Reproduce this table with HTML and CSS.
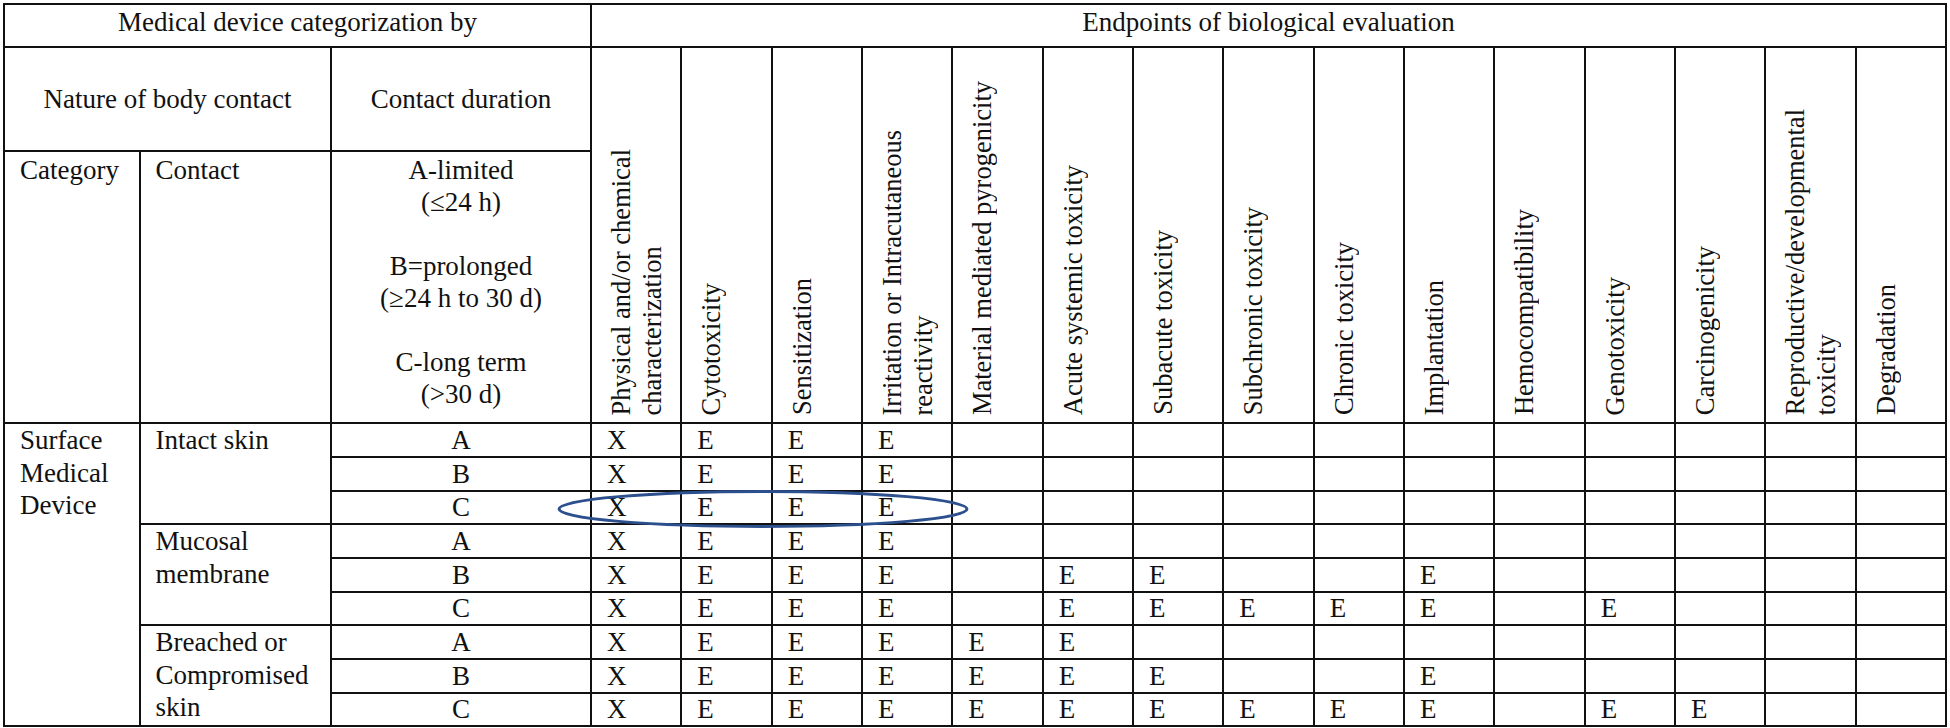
FILE: index.html
```html
<!DOCTYPE html>
<html lang="en">
<head>
<meta charset="utf-8">
<title>Biological evaluation endpoints</title>
<link rel="stylesheet" href="styles.css">
</head>
<body>
<div class="page">
  <table class="grid">
    <colgroup>
      <col class="c-cat"><col class="c-con"><col class="c-dur">
      <col><col><col><col><col><col><col><col><col><col><col><col><col><col><col>
    </colgroup>
    <thead>
      <tr class="r1">
        <th colspan="3" class="top">Medical device categorization by</th>
        <th colspan="15" class="top">Endpoints of biological evaluation</th>
      </tr>
      <tr class="r2">
        <th colspan="2" class="mid">Nature of body contact</th>
        <th class="mid">Contact duration</th>
        <th rowspan="2" class="vh"><div class="vt">Physical and/or chemical<br>characterization</div></th>
        <th rowspan="2" class="vh"><div class="vt">Cytotoxicity</div></th>
        <th rowspan="2" class="vh"><div class="vt">Sensitization</div></th>
        <th rowspan="2" class="vh"><div class="vt">Irritation or Intracutaneous<br>reactivity</div></th>
        <th rowspan="2" class="vh"><div class="vt">Material mediated pyrogenicity</div></th>
        <th rowspan="2" class="vh"><div class="vt">Acute systemic toxicity</div></th>
        <th rowspan="2" class="vh"><div class="vt">Subacute toxicity</div></th>
        <th rowspan="2" class="vh"><div class="vt">Subchronic toxicity</div></th>
        <th rowspan="2" class="vh"><div class="vt">Chronic toxicity</div></th>
        <th rowspan="2" class="vh"><div class="vt">Implantation</div></th>
        <th rowspan="2" class="vh"><div class="vt">Hemocompatibility</div></th>
        <th rowspan="2" class="vh"><div class="vt">Genotoxicity</div></th>
        <th rowspan="2" class="vh"><div class="vt">Carcinogenicity</div></th>
        <th rowspan="2" class="vh"><div class="vt">Reproductive/developmental<br>toxicity</div></th>
        <th rowspan="2" class="vh"><div class="vt">Degradation</div></th>
      </tr>
      <tr class="r3">
        <th class="sub">Category</th>
        <th class="sub">Contact</th>
        <th class="sub dur">A-limited<br>(≤24 h)<br><br>B=prolonged<br>(≥24 h to 30 d)<br><br>C-long term<br>(&gt;30 d)</th>
      </tr>
    </thead>
    <tbody>
      <tr class="dr t">
        <td rowspan="9" class="lab">Surface Medical Device</td>
        <td rowspan="3" class="lab">Intact skin</td>
        <td class="d">A</td>
        <td>X</td><td>E</td><td>E</td><td>E</td><td></td><td></td><td></td><td></td><td></td><td></td><td></td><td></td><td></td><td></td><td></td>
      </tr>
      <tr class="dr t">
        <td class="d">B</td>
        <td>X</td><td>E</td><td>E</td><td>E</td><td></td><td></td><td></td><td></td><td></td><td></td><td></td><td></td><td></td><td></td><td></td>
      </tr>
      <tr class="dr">
        <td class="d">C</td>
        <td>X</td><td>E</td><td>E</td><td>E</td><td></td><td></td><td></td><td></td><td></td><td></td><td></td><td></td><td></td><td></td><td></td>
      </tr>
      <tr class="dr t">
        <td rowspan="3" class="lab">Mucosal membrane</td>
        <td class="d">A</td>
        <td>X</td><td>E</td><td>E</td><td>E</td><td></td><td></td><td></td><td></td><td></td><td></td><td></td><td></td><td></td><td></td><td></td>
      </tr>
      <tr class="dr t">
        <td class="d">B</td>
        <td>X</td><td>E</td><td>E</td><td>E</td><td></td><td>E</td><td>E</td><td></td><td></td><td>E</td><td></td><td></td><td></td><td></td><td></td>
      </tr>
      <tr class="dr">
        <td class="d">C</td>
        <td>X</td><td>E</td><td>E</td><td>E</td><td></td><td>E</td><td>E</td><td>E</td><td>E</td><td>E</td><td></td><td>E</td><td></td><td></td><td></td>
      </tr>
      <tr class="dr t">
        <td rowspan="3" class="lab">Breached or Compromised skin</td>
        <td class="d">A</td>
        <td>X</td><td>E</td><td>E</td><td>E</td><td>E</td><td>E</td><td></td><td></td><td></td><td></td><td></td><td></td><td></td><td></td><td></td>
      </tr>
      <tr class="dr t">
        <td class="d">B</td>
        <td>X</td><td>E</td><td>E</td><td>E</td><td>E</td><td>E</td><td>E</td><td></td><td></td><td>E</td><td></td><td></td><td></td><td></td><td></td>
      </tr>
      <tr class="dr">
        <td class="d">C</td>
        <td>X</td><td>E</td><td>E</td><td>E</td><td>E</td><td>E</td><td>E</td><td>E</td><td>E</td><td>E</td><td></td><td>E</td><td>E</td><td></td><td></td>
      </tr>
    </tbody>
  </table>
  <svg class="mark" width="440" height="50" viewBox="0 0 440 50" aria-hidden="true">
    <ellipse cx="218" cy="24" rx="204" ry="17.5" fill="none" stroke="#2c4f8e" stroke-width="3"/>
  </svg>
</div>
</body>
</html>
```

FILE: styles.css
```css
html, body {
  margin: 0;
  padding: 0;
  background: #ffffff;
}

body {
  font-family: "Liberation Serif", "Times New Roman", serif;
  color: #111111;
}

.page {
  position: relative;
  width: 1950px;
  padding: 3px 0 0 3px;
  box-sizing: border-box;
}

.grid {
  border-collapse: collapse;
  table-layout: fixed;
  width: 1944px;
  font-size: 27px;
  line-height: 32px;
}

.c-cat { width: 135.5px; }
.c-con { width: 191.5px; }
.c-dur { width: 260px; }

.grid th,
.grid td {
  border: 2px solid #111111;
  padding: 0 15px;
  font-weight: normal;
  text-align: left;
  overflow: hidden;
}

.r1 { height: 43px; }
.r2 { height: 104px; }
.r3 { height: 272px; }
.dr { height: 33px; }
.dr.t { height: 34px; }

.grid th.top {
  text-align: center;
  vertical-align: top;
  padding-top: 1px;
}

.grid th.mid {
  text-align: center;
  vertical-align: middle;
}

.grid th.sub {
  vertical-align: top;
  padding-top: 2px;
}

.grid th.dur {
  text-align: center;
}

.grid th.vh {
  vertical-align: bottom;
  padding: 0 0 7px 14px;
  font-size: 26.5px;
  line-height: 31px;
}

.vt {
  writing-mode: vertical-rl;
  transform: rotate(180deg);
  white-space: nowrap;
}

.grid td {
  line-height: 31px;
  vertical-align: middle;
}

.grid td.lab {
  vertical-align: top;
  line-height: 32.5px;
  padding-top: 0;
}

.grid td.d {
  text-align: center;
}

.mark {
  position: absolute;
  left: 545px;
  top: 485px;
  overflow: visible;
}
```
